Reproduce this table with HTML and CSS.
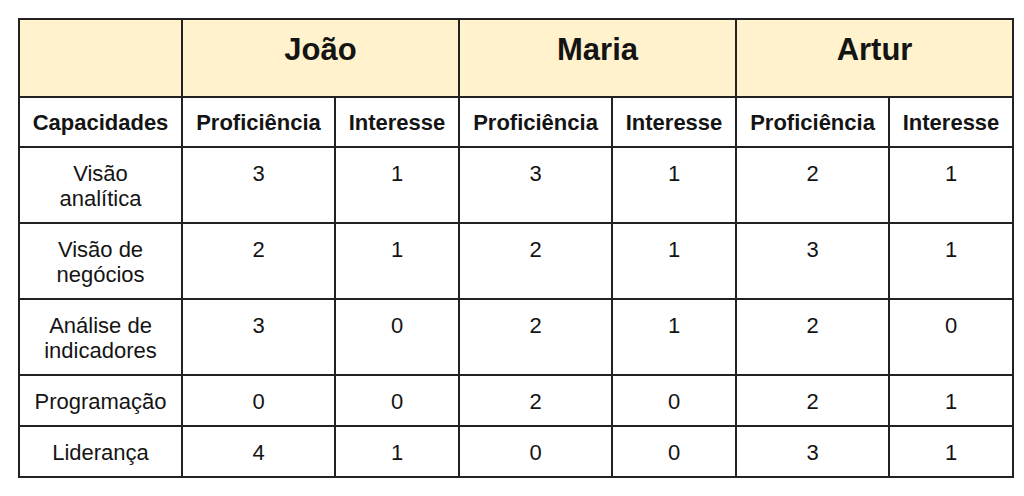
FILE: index.html
```html
<!DOCTYPE html>
<html lang="pt">
<head>
<meta charset="utf-8">
<link rel="stylesheet" href="styles.css">
</head>
<body>
<table class="grid">
  <colgroup>
    <col class="c-cap">
    <col class="c-prof">
    <col class="c-int">
    <col class="c-prof">
    <col class="c-int">
    <col class="c-prof">
    <col class="c-int">
  </colgroup>
  <thead>
    <tr class="names">
      <th></th>
      <th colspan="2">João</th>
      <th colspan="2">Maria</th>
      <th colspan="2">Artur</th>
    </tr>
    <tr class="labels">
      <th>Capacidades</th>
      <th>Proficiência</th>
      <th>Interesse</th>
      <th>Proficiência</th>
      <th>Interesse</th>
      <th>Proficiência</th>
      <th>Interesse</th>
    </tr>
  </thead>
  <tbody>
    <tr>
      <td>Visão<br>analítica</td>
      <td>3</td><td>1</td><td>3</td><td>1</td><td>2</td><td>1</td>
    </tr>
    <tr>
      <td>Visão de<br>negócios</td>
      <td>2</td><td>1</td><td>2</td><td>1</td><td>3</td><td>1</td>
    </tr>
    <tr>
      <td>Análise de<br>indicadores</td>
      <td>3</td><td>0</td><td>2</td><td>1</td><td>2</td><td>0</td>
    </tr>
    <tr>
      <td>Programação</td>
      <td>0</td><td>0</td><td>2</td><td>0</td><td>2</td><td>1</td>
    </tr>
    <tr>
      <td>Liderança</td>
      <td>4</td><td>1</td><td>0</td><td>0</td><td>3</td><td>1</td>
    </tr>
  </tbody>
</table>
</body>
</html>
```

FILE: styles.css
```css
html, body {
  margin: 0;
  padding: 0;
  background: #ffffff;
}

body {
  padding: 18px 0 0 18px;
  font-family: "Liberation Sans", Arial, sans-serif;
  color: #141414;
}

.grid {
  width: 994px;
  table-layout: fixed;
  border-collapse: collapse;
  border: 2px solid #222222;
}

.c-cap { width: 163px; }
.c-prof { width: 153px; }
.c-int { width: 124px; }

.grid th,
.grid td {
  border: 2px solid #222222;
  text-align: center;
  padding: 0;
}

.names th {
  background: #fff2cc;
  height: 78px;
  padding-bottom: 16px;
  box-sizing: border-box;
  font-size: 31px;
  line-height: 36px;
  font-weight: bold;
  vertical-align: middle;
}

.labels th {
  height: 48px;
  font-size: 22px;
  font-weight: bold;
  line-height: 25px;
  vertical-align: middle;
}

.grid td {
  font-size: 22px;
  line-height: 25px;
  padding: 13px 0 11px;
  vertical-align: top;
}
```
